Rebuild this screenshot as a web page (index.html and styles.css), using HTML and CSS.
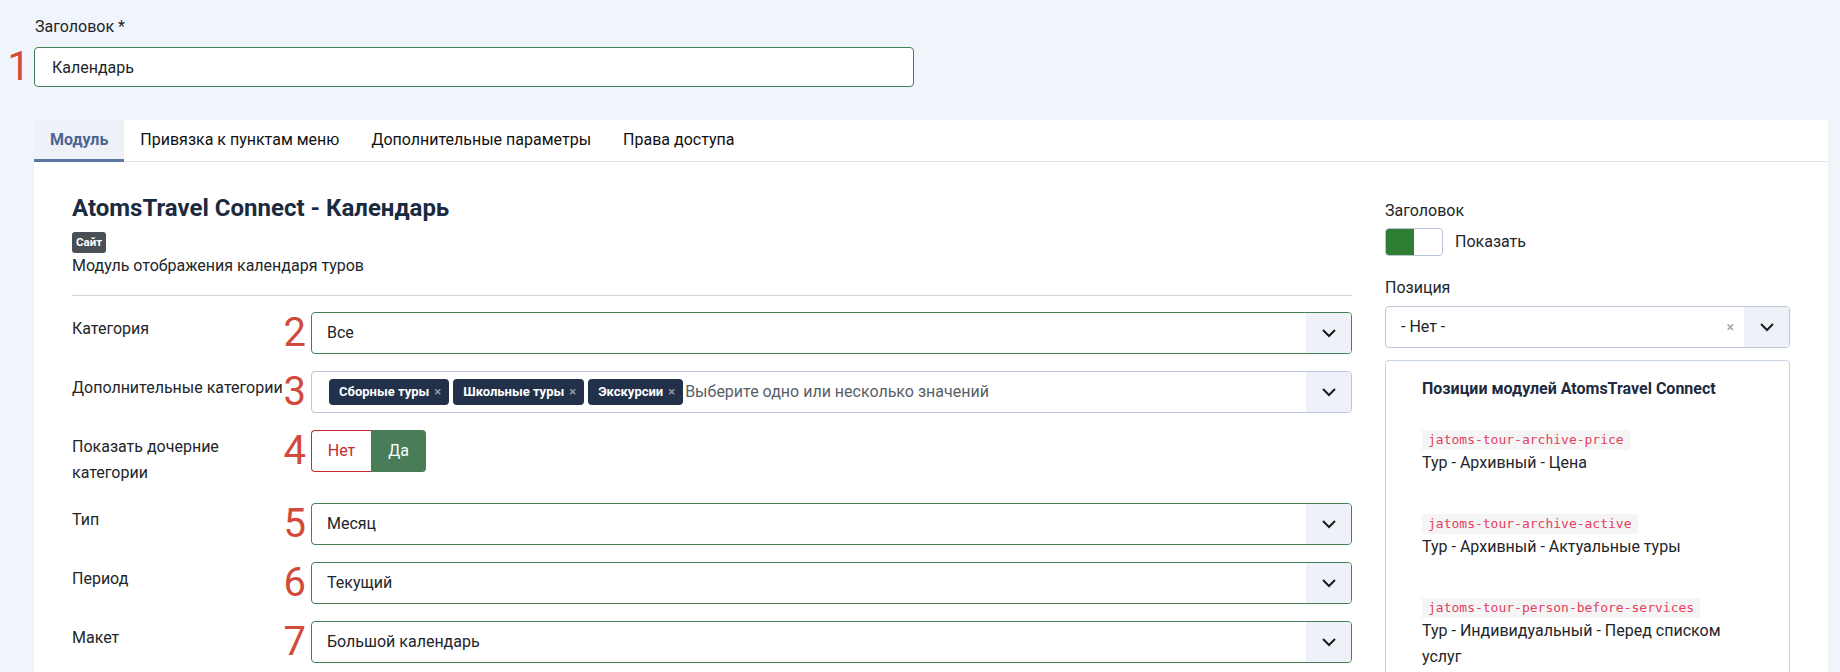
FILE: index.html
```html
<!DOCTYPE html>
<html lang="ru">
<head>
    <meta charset="UTF-8">
    <meta name="viewport" content="width=device-width, initial-scale=1.0">
    <title>Модули: AtomsTravel Connect - Календарь</title>
    <link rel="stylesheet" href="styles.css">
</head>
<body>
    <div class="page">
        <div class="title-field">
            <label class="title-label" for="jform_title">Заголовок *</label>
            <div class="controls">
                <span class="mark">1</span>
                <input class="title-input" id="jform_title" type="text" value="Календарь">
            </div>
        </div>

        <div class="tabs-panel">
            <ul class="tabs">
                <li class="tab active">Модуль</li>
                <li class="tab">Привязка к пунктам меню</li>
                <li class="tab">Дополнительные параметры</li>
                <li class="tab">Права доступа</li>
            </ul>

            <div class="tab-content">
                <div class="main-col">
                    <h2 class="module-title">AtomsTravel Connect - Календарь</h2>
                    <span class="badge">Сайт</span>
                    <p class="module-desc">Модуль отображения календаря туров</p>
                    <hr class="divider">

                    <div class="control-group">
                        <div class="control-label">Категория</div>
                        <div class="controls">
                            <span class="mark">2</span>
                            <div class="select valid">
                                <span class="select-value">Все</span>
                                <span class="select-arrow"><svg viewBox="0 0 16 16" width="16" height="16"><path d="M2 5l6 6 6-6" fill="none" stroke="currentColor" stroke-width="2"/></svg></span>
                            </div>
                        </div>
                    </div>

                    <div class="control-group">
                        <div class="control-label">Дополнительные категории</div>
                        <div class="controls">
                            <span class="mark">3</span>
                            <div class="select multi">
                                <div class="choices">
                                    <span class="choice">Сборные туры <i>×</i></span>
                                    <span class="choice">Школьные туры <i>×</i></span>
                                    <span class="choice">Экскурсии <i>×</i></span>
                                    <span class="placeholder">Выберите одно или несколько значений</span>
                                </div>
                                <span class="select-arrow"><svg viewBox="0 0 16 16" width="16" height="16"><path d="M2 5l6 6 6-6" fill="none" stroke="currentColor" stroke-width="2"/></svg></span>
                            </div>
                        </div>
                    </div>

                    <div class="control-group">
                        <div class="control-label">Показать дочерние<br>категории</div>
                        <div class="controls">
                            <span class="mark mark-top">4</span>
                            <div class="switcher">
                                <span class="switch-no">Нет</span>
                                <span class="switch-yes">Да</span>
                            </div>
                        </div>
                    </div>

                    <div class="control-group">
                        <div class="control-label">Тип</div>
                        <div class="controls">
                            <span class="mark">5</span>
                            <div class="select valid">
                                <span class="select-value">Месяц</span>
                                <span class="select-arrow"><svg viewBox="0 0 16 16" width="16" height="16"><path d="M2 5l6 6 6-6" fill="none" stroke="currentColor" stroke-width="2"/></svg></span>
                            </div>
                        </div>
                    </div>

                    <div class="control-group">
                        <div class="control-label">Период</div>
                        <div class="controls">
                            <span class="mark">6</span>
                            <div class="select valid">
                                <span class="select-value">Текущий</span>
                                <span class="select-arrow"><svg viewBox="0 0 16 16" width="16" height="16"><path d="M2 5l6 6 6-6" fill="none" stroke="currentColor" stroke-width="2"/></svg></span>
                            </div>
                        </div>
                    </div>

                    <div class="control-group">
                        <div class="control-label">Макет</div>
                        <div class="controls">
                            <span class="mark">7</span>
                            <div class="select valid">
                                <span class="select-value">Большой календарь</span>
                                <span class="select-arrow"><svg viewBox="0 0 16 16" width="16" height="16"><path d="M2 5l6 6 6-6" fill="none" stroke="currentColor" stroke-width="2"/></svg></span>
                            </div>
                        </div>
                    </div>
                </div>

                <div class="side-col">
                    <div class="side-label">Заголовок</div>
                    <div class="toggle-row">
                        <span class="toggle"><span class="toggle-on"></span></span>
                        <span>Показать</span>
                    </div>

                    <div class="side-label position-label">Позиция</div>
                    <div class="select position">
                        <span class="select-value">- Нет -</span>
                        <span class="select-clear">×</span>
                        <span class="select-arrow"><svg viewBox="0 0 16 16" width="16" height="16"><path d="M2 5l6 6 6-6" fill="none" stroke="currentColor" stroke-width="2"/></svg></span>
                    </div>

                    <div class="positions-box">
                        <h4>Позиции модулей AtomsTravel Connect</h4>
                        <div class="position-item">
                            <code>jatoms-tour-archive-price</code>
                            <div>Тур - Архивный - Цена</div>
                        </div>
                        <div class="position-item">
                            <code>jatoms-tour-archive-active</code>
                            <div>Тур - Архивный - Актуальные туры</div>
                        </div>
                        <div class="position-item">
                            <code>jatoms-tour-person-before-services</code>
                            <div>Тур - Индивидуальный - Перед списком услуг</div>
                        </div>
                    </div>
                </div>
            </div>
        </div>
    </div>
</body>
</html>
```

FILE: styles.css
```css
:root {
    --bg-light: #f0f4fb;
    --text: #22262a;
    --heading: #1c2b40;
    --valid: #457d54;
    --border: #b9c7d9;
    --tab-active: #5a76a1;
    --mark: #d24a3b;
    --tag-bg: #22304a;
}

html, body {
    margin: 0;
    height: 100%;
    overflow: hidden;
}

body {
    font-family: Roboto, "Noto Sans", sans-serif;
    font-size: 16px;
    line-height: 26px;
    color: var(--text);
    background: var(--bg-light);
}

.page {
    padding: 14px 12px 0 34px;
}

/* red annotation numbers */
.controls {
    position: relative;
}

.mark {
    position: absolute;
    right: 100%;
    top: 50%;
    margin-right: 5px;
    transform: translateY(-50%);
    font-size: 40px;
    font-weight: 400;
    line-height: 1;
    color: var(--mark);
}

.mark-top {
    top: 21px;
}

.title-field .mark {
    margin-right: 4px;
}

/* title */
.title-label {
    display: block;
    margin: 0 0 7px 1px;
}

.title-field .controls {
    width: 880px;
}

.title-input {
    display: block;
    width: 100%;
    height: 40px;
    box-sizing: border-box;
    padding: 0 17px;
    border: 1px solid var(--valid);
    border-radius: 4px;
    font: inherit;
    color: var(--text);
    background: #fff;
}

/* tabs */
.tabs-panel {
    margin-top: 33px;
    background: #fff;
}

.tabs {
    display: flex;
    margin: 0;
    padding: 0;
    list-style: none;
    border-bottom: 1px solid #dfe5ee;
}

.tab {
    padding: 7px 16px 6px;
    height: 26px;
    border-bottom: 3px solid transparent;
    margin-bottom: -1px;
    color: #111;
}

.tab.active {
    background: #eef2f8;
    border-bottom-color: var(--tab-active);
    color: #4a6590;
    font-weight: 700;
}

.tab-content {
    display: grid;
    grid-template-columns: minmax(0, 1fr) 405px;
    column-gap: 33px;
    padding: 32px 38px 0 38px;
}

/* left column */
.module-title {
    margin: 0 0 10px;
    font-size: 24px;
    line-height: 28px;
    font-weight: 700;
    color: var(--heading);
}

.badge {
    display: block;
    width: fit-content;
    padding: 0 4px;
    height: 21px;
    line-height: 21px;
    border-radius: 3px;
    background: #4a4f56;
    color: #fff;
    font-size: 11.5px;
    font-weight: 700;
}

.module-desc {
    margin: 0;
}

.divider {
    margin: 16px 0;
    border: 0;
    border-top: 1px solid #d3d7dc;
}

.control-group {
    display: grid;
    grid-template-columns: 239px minmax(0, 1fr);
    margin-bottom: 17px;
}

.control-label {
    padding-top: 4px;
}

.select {
    display: flex;
    align-items: center;
    height: 42px;
    box-sizing: border-box;
    border: 1px solid var(--border);
    border-radius: 4px;
    background: #fff;
    overflow: hidden;
}

.select.valid {
    border-color: var(--valid);
}

.select-value {
    flex: 1;
    padding-left: 15px;
}

.select-arrow {
    display: flex;
    align-items: center;
    justify-content: center;
    width: 45px;
    align-self: stretch;
    background: #eef2f8;
    color: #1b1b1b;
}

.choices {
    flex: 1;
    display: flex;
    align-items: center;
    gap: 4px;
    padding-left: 17px;
}

.choice {
    display: inline-flex;
    align-items: center;
    height: 26px;
    padding: 0 8px 0 10px;
    border-radius: 4px;
    background: var(--tag-bg);
    color: #fff;
    font-size: 13px;
    font-weight: 700;
}

.choice i {
    margin-left: 5px;
    font-style: normal;
    font-weight: 700;
    color: #8d97a6;
}

.placeholder {
    margin-left: -2px;
    color: #595f67;
}

.switcher {
    display: inline-flex;
    height: 42px;
    box-sizing: border-box;
}

.switcher span {
    display: flex;
    align-items: center;
    justify-content: center;
}

.switch-no {
    width: 60px;
    box-sizing: border-box;
    border: 1px solid #c52a2f;
    border-right: 0;
    border-radius: 4px 0 0 4px;
    color: #c52a2f;
}

.switch-yes {
    width: 55px;
    border-radius: 0 4px 4px 0;
    background: #487d57;
    color: #fff;
}

/* right column */
.side-col {
    padding-top: 4px;
}

.toggle-row {
    display: flex;
    align-items: center;
    gap: 12px;
    margin-top: 4px;
}

.toggle {
    display: flex;
    width: 58px;
    height: 28px;
    box-sizing: border-box;
    border: 1px solid #b9c5d5;
    border-radius: 4px;
    overflow: hidden;
}

.toggle-on {
    width: 50%;
    background: #2e7d32;
}

.position-label {
    margin-top: 19px;
    margin-bottom: 5px;
}

.select-clear {
    padding-right: 10px;
    color: #9aa0a6;
    font-size: 14px;
}

.positions-box {
    margin-top: 12px;
    padding: 15px 36px 13px;
    border: 1px solid #c7d2e0;
    border-radius: 4px;
}

.positions-box h4 {
    margin: 0 0 28px;
    font-size: 16px;
    line-height: 26px;
    color: var(--heading);
}

.position-item {
    display: flex;
    flex-direction: column;
    align-items: flex-start;
    margin-bottom: 38px;
}

.position-item code {
    padding: 2px 6px;
    line-height: 16px;
    font-family: "DejaVu Sans Mono", "Liberation Mono", monospace;
    font-size: 13px;
    color: #e4405f;
    background: #f5f5f5;
}
```
